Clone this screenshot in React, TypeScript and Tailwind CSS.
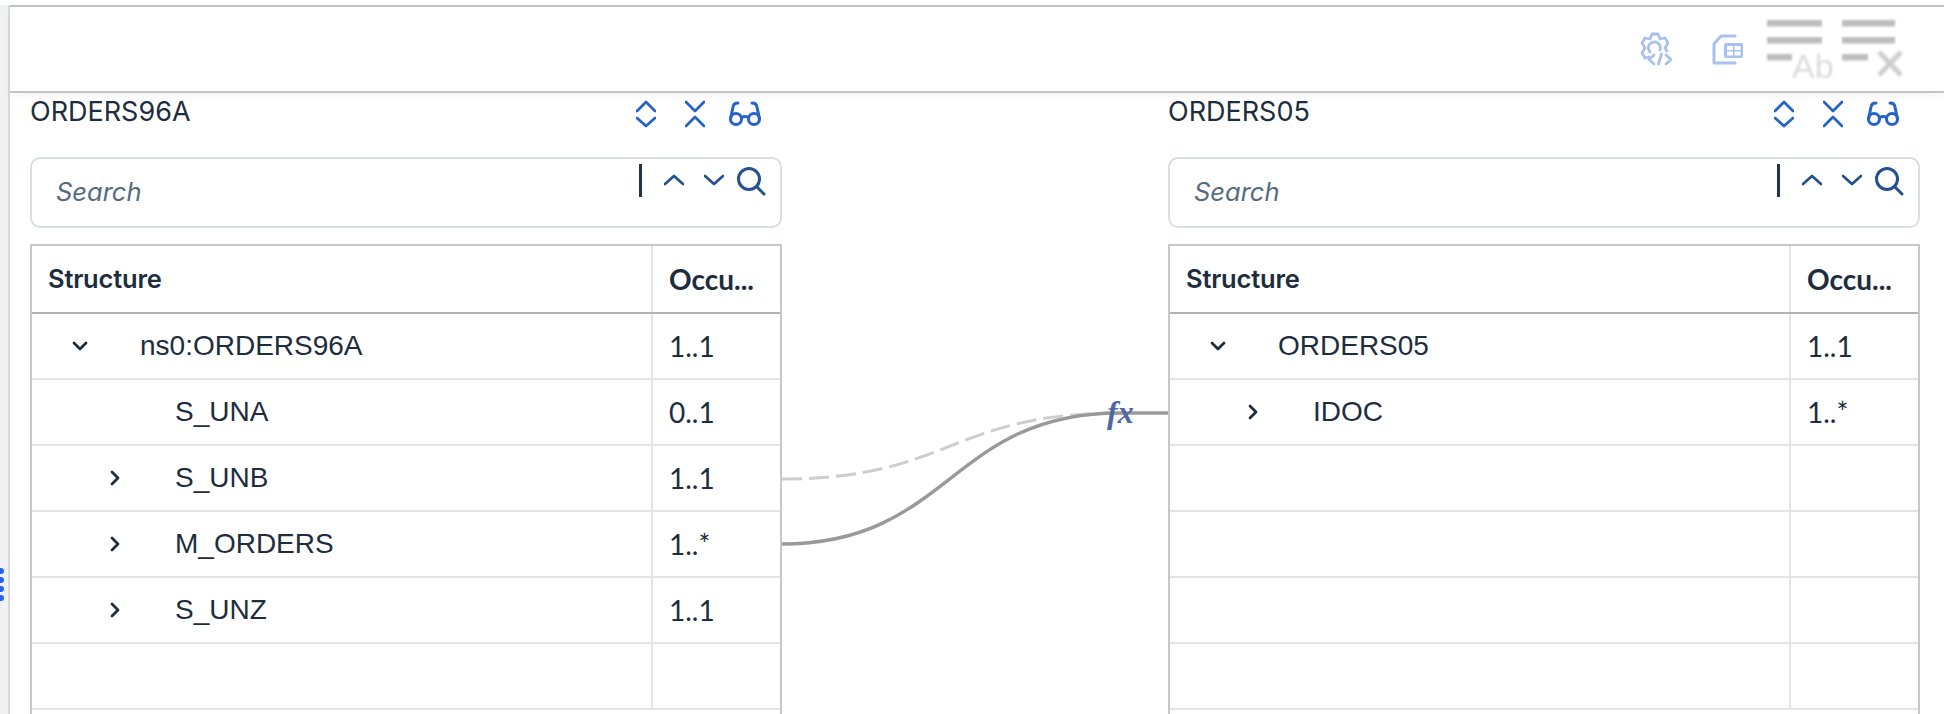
const Expand = () => (
  <svg width="20" height="28" viewBox="0 0 20 28" fill="none" stroke="#2563c9" strokeWidth="2.8" strokeLinecap="round" strokeLinejoin="round">
    <path d="M1 11 L10 2 L19 11" />
    <path d="M1 18 L10 26 L19 18" />
  </svg>
)

const Collapse = () => (
  <svg width="20" height="28" viewBox="0 0 20 28" fill="none" stroke="#2563c9" strokeWidth="2.8" strokeLinecap="round" strokeLinejoin="round">
    <path d="M1 2 L10 11 L19 2" />
    <path d="M1 26 L10 17 L19 26" />
  </svg>
)

const Glasses = () => (
  <svg width="32" height="26" viewBox="0 0 32 26" fill="none" stroke="#2563c9" strokeWidth="3" strokeLinecap="round">
    <circle cx="7" cy="18" r="5.5" />
    <circle cx="25" cy="18" r="5.5" />
    <path d="M12.5 16.5 Q16 14.5 19.5 16.5" />
    <path d="M1.5 18 L4 6 Q4.5 2 9 2" />
    <path d="M30.5 18 L28 6 Q27.5 2 23 2" />
  </svg>
)

const SearchControls = () => (
  <div className="flex items-start pt-[5px] pr-[14px]">
    <div className="w-[3px] h-[33px] bg-[#223548]" />
    <svg className="ml-[22px] mt-[10px]" width="20" height="12" viewBox="0 0 20 12" fill="none" stroke="#24528f" strokeWidth="2.8" strokeLinecap="round" strokeLinejoin="round">
      <path d="M1 10 L10 2 L19 10" />
    </svg>
    <svg className="ml-[20px] mt-[10px]" width="20" height="12" viewBox="0 0 20 12" fill="none" stroke="#24528f" strokeWidth="2.8" strokeLinecap="round" strokeLinejoin="round">
      <path d="M1 2 L10 10 L19 2" />
    </svg>
    <svg className="ml-[12px] mt-[2px]" width="30" height="30" viewBox="0 0 30 30" fill="none" stroke="#24528f" strokeWidth="3" strokeLinecap="round">
      <circle cx="13" cy="13" r="10.5" />
      <path d="M21 21 L28 28" />
    </svg>
  </div>
)

type Row = { name: string; occ: string; depth: number; toggle?: 'open' | 'closed' }

const Tree = ({ rows }: { rows: Row[] }) => {
  const filled: (Row | null)[] = [...rows]
  while (filled.length < 6) filled.push(null)
  return (
    <div className="border-2 border-[#c8c8c8] border-b-0 grow font-['Liberation_Sans',Arial,sans-serif]">
      <div className="flex h-[68px] border-b-2 border-[#a9b4be] text-[#1d2d3e]">
        <div className="flex-1 flex items-center pl-[16px] font-['Inter',sans-serif] font-semibold text-[25.5px] tracking-[-0.2px]">Structure</div>
        <div className="w-[129px] flex items-center pl-[16px] border-l-2 border-[#e5e5e5] font-['Lato',sans-serif] font-bold text-[28px]">Occu...</div>
      </div>
      {filled.map((row, i) => (
        <div key={i} className="flex h-[66px] border-b-2 border-[#e5e5e5] text-[28px] text-[#1d2d3e]">
          <div className="flex-1 flex items-center relative">
            {row && row.toggle && (
              <svg
                className={row.depth === 0 ? 'ml-[40px]' : 'ml-[75px]'}
                width="16"
                height="16"
                viewBox="0 0 16 16"
                fill="none"
                stroke="#1d2d3e"
                strokeWidth="2.8"
                strokeLinecap="round"
                strokeLinejoin="round"
              >
                {row.toggle === 'open' ? <path d="M2 5 L8 11 L14 5" /> : <path d="M5 2 L11 8 L5 14" />}
              </svg>
            )}
            {row && (
              <span className={row.depth === 0 ? 'absolute left-[108px]' : 'absolute left-[143px]'}>{row.name}</span>
            )}
          </div>
          <div className="w-[129px] flex items-center pl-[16px] border-l-2 border-[#e5e5e5] font-['Lato',sans-serif] text-[28px]">{row?.occ}</div>
        </div>
      ))}
    </div>
  )
}

const Side = ({ title, rows }: { title: string; rows: Row[] }) => (
  <div className="w-[752px] h-full flex flex-col">
    <div className="h-[64px] shrink-0 flex justify-between items-start">
      <span className="font-['Inter',sans-serif] text-[27px] leading-[38px] text-[#1d2d3e]">{title}</span>
      <div className="flex items-center pt-[7px] pr-[21px] gap-[29px]">
        <Expand />
        <Collapse />
        <div className="-ml-[5px]">
          <Glasses />
        </div>
      </div>
    </div>
    <div className="h-[71px] mb-[16px] shrink-0 border-2 border-[#d9dee4] rounded-[10px] flex justify-between">
      <span className="pl-[24px] pt-[17px] font-['Inter',sans-serif] italic text-[25.5px] leading-[32px] text-[#556b82]">Search</span>
      <SearchControls />
    </div>
    <Tree rows={rows} />
  </div>
)

const leftRows: Row[] = [
  { name: 'ns0:ORDERS96A', occ: '1..1', depth: 0, toggle: 'open' },
  { name: 'S_UNA', occ: '0..1', depth: 1 },
  { name: 'S_UNB', occ: '1..1', depth: 1, toggle: 'closed' },
  { name: 'M_ORDERS', occ: '1..*', depth: 1, toggle: 'closed' },
  { name: 'S_UNZ', occ: '1..1', depth: 1, toggle: 'closed' },
]

const rightRows: Row[] = [
  { name: 'ORDERS05', occ: '1..1', depth: 0, toggle: 'open' },
  { name: 'IDOC', occ: '1..*', depth: 1, toggle: 'closed' },
]

export default function App() {
  return (
    <div className="w-[1944px] h-[714px] overflow-hidden flex bg-white relative">
      {/* resize handle dots */}
      <div className="absolute left-[-2px] top-[568px] flex flex-col gap-[3px]">
        <div className="w-[6px] h-[6px] rounded-full bg-[#2563eb]" />
        <div className="w-[6px] h-[6px] rounded-full bg-[#2563eb]" />
        <div className="w-[6px] h-[6px] rounded-full bg-[#2563eb]" />
        <div className="w-[6px] h-[6px] rounded-full bg-[#2563eb]" />
      </div>
      <div className="w-[8px] mt-[5px] bg-[#eff1f2] shrink-0" />
      <div className="flex-1 mt-[5px] flex flex-col border-l-2 border-[#d6d8da]">
        {/* toolbar */}
        <div className="h-[88px] border-y-2 border-[#c4c4c4] flex items-center justify-end shrink-0 pr-[38px] shadow-[0_4px_8px_rgba(0,0,0,0.04)]">
          <svg width="33" height="34" viewBox="0 0 33 34" fill="none" stroke="#aac0ee" strokeWidth="2.8" strokeLinecap="round" strokeLinejoin="round">
            <path d="M9 25 L5 26 L2 21 L5 16 L2 11 L5 6 L10 7 L12 2 L18 2 L20 7 L25 6 L28 11 L25 16 L27 19" />
            <path d="M10 20 A6 6 0 1 1 20 18" />
            <path d="M14 23 L9 27.5 L14 32 M26 23 L31 27.5 L26 32 M21.5 22 L18.5 32" />
          </svg>
          <svg className="ml-[39px]" width="32" height="32" viewBox="0 0 32 32" fill="none">
            <path d="M23 3 L9 3 L2 11 L2 30 L23 30" stroke="#aac0ee" strokeWidth="3" strokeLinecap="round" strokeLinejoin="round" />
            <rect x="12" y="10" width="19" height="15" rx="2" fill="#aac0ee" />
            <rect x="15" y="13" width="6" height="4" fill="#ffffff" />
            <rect x="22.5" y="13" width="6" height="4" fill="#ffffff" />
            <rect x="15" y="18.5" width="6" height="4" fill="#ffffff" />
            <rect x="22.5" y="18.5" width="6" height="4" fill="#ffffff" />
          </svg>
          <svg className="ml-[21px] blur-[1px]" width="70" height="70" viewBox="0 0 70 70" fill="#bdbdbd">
            <rect x="2" y="6" width="55" height="6.5" />
            <rect x="2" y="23" width="55" height="6.5" />
            <rect x="2" y="40" width="25" height="6.5" />
            <text x="27" y="64" fontSize="34" fill="#dcdcdc" fontFamily="Liberation Sans, Arial, sans-serif">Ab</text>
          </svg>
          <svg className="ml-[5px] blur-[1px]" width="66" height="70" viewBox="0 0 66 70" fill="#bdbdbd">
            <rect x="2" y="6" width="53" height="6.5" />
            <rect x="2" y="23" width="53" height="6.5" />
            <rect x="2" y="40" width="26" height="6.5" />
            <path d="M39 38 L61 61 M61 38 L39 61" stroke="#cfcfcf" strokeWidth="5" />
          </svg>
        </div>
        {/* mapping area */}
        <div className="flex-1 flex px-[20px] min-h-0">
          <Side title="ORDERS96A" rows={leftRows} />
          <div className="w-[386px] shrink-0 relative">
            <svg className="absolute left-0 top-0" width="386" height="621" viewBox="782 93 386 621" fill="none">
              <path d="M782 479 C950 479 950 413 1120 413" stroke="#cdcdcd" strokeWidth="3" strokeDasharray="20 7" />
              <path d="M782 544 C950 544 950 413 1120 413 L1168 413" stroke="#999999" strokeWidth="3.4" />
            </svg>
            <span className="absolute left-[325px] top-[299px] font-['Liberation_Serif',serif] italic font-bold text-[32px] leading-[40px] text-[#4d69a3]">fx</span>
          </div>
          <Side title="ORDERS05" rows={rightRows} />
        </div>
      </div>
    </div>
  )
}
